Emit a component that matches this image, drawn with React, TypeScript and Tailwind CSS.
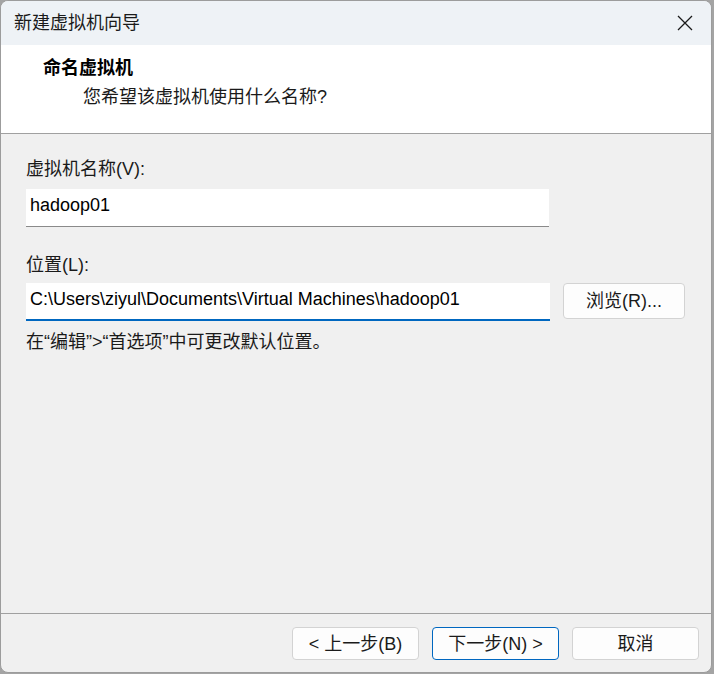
import React from "react";

const FONT = "font-['Liberation_Sans','Noto_Sans_CJK_SC',sans-serif]";

function Btn({ children, primary }: { children: React.ReactNode; primary?: boolean }) {
  return (
    <div
      className={`flex h-[33px] w-[127px] items-center justify-center rounded-[4px] border bg-[#fdfdfd] text-[18px] leading-[24px] text-[#1b1b1b] ${
        primary ? "border-[#0067c0]" : "border-[#d3d3d3]"
      }`}
    >
      {children}
    </div>
  );
}

export default function App() {
  return (
    <div className={`h-[674px] w-[714px] bg-[#a4a4a4] ${FONT}`}>
      <div className="flex h-[673px] w-[712px] flex-col overflow-hidden rounded-[8px] border border-[#9c9c9c] bg-[#f0f0f0]">
        {/* title bar */}
        <div className="flex h-[44px] shrink-0 items-center justify-between bg-[#eef2f6] pl-[13px] pr-[17px]">
          <span className="text-[18px] leading-[24px] text-[#1a1a1a]">新建虚拟机向导</span>
          <svg width="16" height="16" viewBox="0 0 16 16" className="mr-[1px]">
            <path d="M1 1 L15 15 M15 1 L1 15" stroke="#1a1a1a" strokeWidth="1.3" fill="none" />
          </svg>
        </div>
        {/* header */}
        <div className="flex h-[89px] shrink-0 flex-col border-b border-[#a0a0a0] bg-white pt-[11px]">
          <div className="pl-[42px] text-[18px] font-bold leading-[24px] text-black">命名虚拟机</div>
          <div className="mt-[5px] pl-[82px] text-[18px] leading-[24px] text-[#1a1a1a]">您希望该虚拟机使用什么名称?</div>
        </div>
        {/* body */}
        <div className="flex flex-1 flex-col pl-[25px] pt-[23px]">
          <div className="text-[18px] leading-[24px] text-[#1a1a1a]">虚拟机名称(V):</div>
          <div className="mt-[8px] flex h-[38px] w-[523px] items-center border-b border-[#8a8a8a] bg-white pb-[4px] pl-[4px] text-[18px] text-black">
            hadoop01
          </div>
          <div className="mt-[26px] text-[18px] leading-[24px] text-[#1a1a1a]">位置(L):</div>
          <div className="mt-[6px] flex items-start gap-[13px]">
            <div className="flex h-[38px] w-[524px] items-center border-b-2 border-[#0067c0] bg-white pb-[4px] pl-[4px] text-[18px] text-black">
              C:\Users\ziyul\Documents\Virtual Machines\hadoop01
            </div>
            <div className="flex h-[36px] w-[122px] items-center justify-center rounded-[4px] border border-[#d3d3d3] bg-[#fdfdfd] text-[18px] leading-[24px] text-[#1b1b1b]">
              浏览(R)...
            </div>
          </div>
          <div className="mt-[9px] text-[18px] leading-[24px] text-[#1a1a1a]">在“编辑”&gt;“首选项”中可更改默认位置。</div>
        </div>
        {/* footer */}
        <div className="flex h-[59px] shrink-0 items-start justify-end gap-[13px] border-t border-[#a0a0a0] pr-[12px] pt-[13px]">
          <Btn>&lt; 上一步(B)</Btn>
          <Btn primary>下一步(N) &gt;</Btn>
          <Btn>取消</Btn>
        </div>
      </div>
    </div>
  );
}
